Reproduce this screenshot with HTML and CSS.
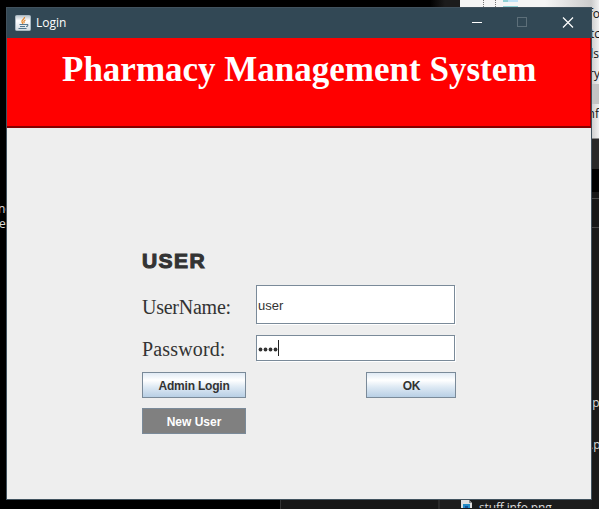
FILE: index.html
```html
<!DOCTYPE html>
<html lang="en">
<head>
<meta charset="utf-8">
<title>Login</title>
<link rel="stylesheet" href="styles.css">
</head>
<body>
<div class="desktop">
  <div class="panel"></div>
  <div class="explorer">
    <svg class="tree" width="80" height="8" viewBox="0 0 80 8"><path d="M23.500 0v7M35.500 0v7" stroke="#777" stroke-dasharray="1 1"/><path d="M43 0h5v2h-5zM43 6h15v2h-15z" fill="#8fd0d4"/><path d="M48 0h10v2h-10z" fill="#c1e4f8"/></svg>
    <ul class="names"><li>nfo</li><li>stc</li><li>ils</li><li>ory</li><li class="selected"></li><li>inf</li></ul>
  </div>
  <div class="side"><div class="band grey"></div><div class="band black"></div><div class="band line"></div><div class="band line tall"></div></div>
  <span class="bg-text left-a">no</span><span class="bg-text left-b">e</span>
  <span class="bg-text right-a">.p</span><span class="bg-text right-b">.p</span>
  <div class="taskrow">
    <svg class="file" width="12" height="9" viewBox="0 0 12 9"><path d="M0 0h8l3 3v6H0z" fill="#dedede"/><path d="M8 0v3h3" fill="#888"/><path d="M2 4h7v5H2z" fill="#238bc5"/><path d="M4 6h3v3H4z" fill="#124f9a"/></svg>
    <span>stuff.info.png</span>
  </div>
  <main class="window">
    <header class="titlebar">
      <svg class="java" width="16" height="16" viewBox="0 0 16 16"><defs><linearGradient id="g" x2="0" y2="1"><stop stop-color="#b9c4cc"/><stop offset=".35" stop-color="#fff"/><stop offset="1" stop-color="#d5dce1"/></linearGradient></defs><rect x=".5" y=".5" width="15" height="15" rx="1" fill="url(#g)" stroke="#a9b8c1"/><path d="M9.500 2C10 4 6 5 7 7l1 2M10.500 5C8.500 6 8.500 7 9.500 8" fill="none" stroke="#e5892f" stroke-width="1.300"/><path d="M4.500 9.500h6.500M5 11.500h5M3.500 13.500h8M11 9.500c3-.5 2 2 0 2" fill="none" stroke="#55788f" stroke-width="1.100"/></svg>
      <span class="caption">Login</span>
      <svg class="controls" width="110" height="30" viewBox="0 0 110 30"><path d="M0 14.500h10" stroke="#fff"/><rect x="45.500" y="9.500" width="9" height="9" fill="none" stroke="#5d6f79"/><path d="M91 9.500l10 10M101 9.500l-10 10" stroke="#fff" stroke-width="1.200"/></svg>
    </header>
    <section class="banner"><h1>Pharmacy Management System</h1></section>
    <form class="form">
      <h2>USER</h2>
      <div class="row username"><label>UserName:</label><div class="field">user</div></div>
      <div class="row password"><label>Password:</label><div class="field"><svg width="23" height="18" viewBox="0 0 23 18"><g fill="#333"><circle cx="3.500" cy="10.500" r="1.900"/><circle cx="8.500" cy="10.500" r="1.900"/><circle cx="13.500" cy="10.500" r="1.900"/><circle cx="18.500" cy="10.500" r="1.900"/></g><path d="M21.500 1v16" stroke="#222"/></svg></div></div>
      <div class="actions"><button type="button" class="admin">Admin Login</button><button type="button" class="ok">OK</button></div>
      <button type="button" class="new">New User</button>
    </form>
  </main>
</div>
</body>
</html>
```
FILE: styles.css
```css
* { box-sizing: border-box; }
body { margin: 0; }
.desktop { position: relative; width: 599px; height: 509px; overflow: hidden; background: linear-gradient(90deg, #000 280px, #343434 280px 281px, #171717 281px 438px, #2a2a2a 438px 440px, #1c1c1c 440px); }
.panel { position: absolute; left: 0; top: 0; width: 460px; height: 8px; background: linear-gradient(90deg, #000 430px, #1c1c1c 445px); }
.explorer { position: absolute; left: 460px; top: 0; width: 139px; height: 139px; background: linear-gradient(90deg, #f5f5f5 85px, #ccc 131px, #f0f0f0); border-bottom: 1px solid #888; }
.tree { display: block; }
.names { position: absolute; left: 132px; top: 4px; width: 7px; margin: 0; padding: 0; list-style: none; font: 12px/20px "Open Sans", sans-serif; color: #111; }
.names li { display: flex; justify-content: flex-end; height: 20px; }
.names li:nth-child(1), .names li:nth-child(2), .names li:nth-child(4) { margin-right: -1px; }
.names .selected { background: #c4c4c4; }
.side { position: absolute; left: 592px; top: 139px; width: 7px; height: 370px; background: #1a1a1a; }
.grey { height: 30px; background: #292929; }
.black { height: 23px; background: #000; }
.line { height: 7px; border-bottom: 1px solid #484848; background: #171717; }
.line.tall { height: 29px; }
.bg-text { position: absolute; font: 12px/14px "Open Sans", sans-serif; color: #ddd; }
.left-a { left: -2px; top: 202px; }
.left-b { left: -1px; top: 217px; }
.right-a { left: 589px; top: 396px; }
.right-b { left: 590px; top: 438px; }
.taskrow { position: absolute; left: 461px; top: 500px; display: flex; gap: 6px; font: 12px/16px "Open Sans", sans-serif; letter-spacing: -.15px; color: #ddd; height: 8px; overflow: hidden; }
.window { position: absolute; left: 6px; top: 7px; width: 586px; height: 493px; border: 1px solid #41525e; background: #eee; }
.titlebar { display: flex; align-items: center; height: 30px; background: #324855; padding-left: 8px; }
.caption { margin-left: 5px; color: #fff; font: 12px/16px "Open Sans", sans-serif; }
.controls { margin-left: auto; margin-right: 9px; }
.banner { height: 90px; background: #f00; border-bottom: 2px solid #850000; border-right: 1px solid #a00000; }
h1 { margin: 0; padding: 11px 0 0 55px; font: bold 35px/42px "Liberation Serif", serif; color: #fff; white-space: nowrap; }
.form { width: 449px; padding: 119px 0 0 135px; color: #333; }
h2 { margin: 0; height: 38px; font: 900 21px/27px "Liberation Sans", sans-serif; letter-spacing: 1.4px; -webkit-text-stroke: 1.1px #333; }
.row { display: flex; width: 314px; height: 39px; }
.row label { width: 114px; font: 20px/44px "Liberation Serif", serif; letter-spacing: -.25px; }
.field { width: 199px; height: 39px; border: 1px solid #7a8a99; box-shadow: 1px 1px #fff; background: #fff; padding-left: 1px; font: 13px/40px "Liberation Sans", sans-serif; }
.row.password { margin-top: 11px; height: 26px; }
.password label { line-height: 28px; letter-spacing: .15px; }
.password .field { height: 26px; padding: 3px 0 0 0; line-height: 0; }
.actions { display: flex; justify-content: space-between; margin-top: 11px; }
button { display: block; height: 26px; padding: 0; border: 1px solid #7a8a99; border-radius: 0; font: bold 12px/26px "Liberation Sans", sans-serif; letter-spacing: -.2px; color: #333; background: linear-gradient(#e0eaf4, #fff 30%, #dce8f3 60%, #b8cfe5); }
.admin, .new { width: 104px; }
.ok { width: 90px; padding-left: 1px; }
.new { margin-top: 10px; color: #fff; background: #808080; letter-spacing: 0; }
```
